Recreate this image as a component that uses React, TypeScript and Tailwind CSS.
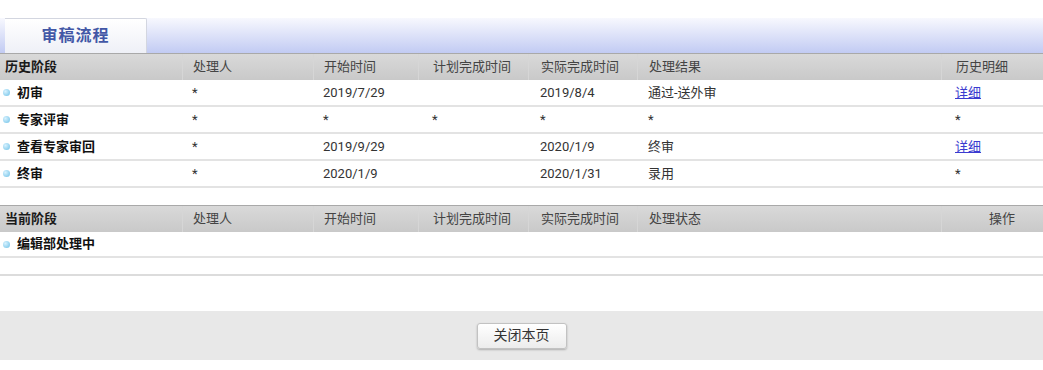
const font = "font-['Roboto','Noto_Sans_CJK_SC',sans-serif]"

const pads = ['pl-[5px]', 'pl-[10px]', 'pl-[10px]', 'pl-[14px]', 'pl-[12px]', 'pl-[11px]', 'pl-[14px]']
const cols = 'grid grid-cols-[182px_131px_105px_110px_109px_304px_1fr]'

const history = [
  ['初审', '*', '2019/7/29', '', '2019/8/4', '通过-送外审', 'link'],
  ['专家评审', '*', '*', '*', '*', '*', '*'],
  ['查看专家审回', '*', '2019/9/29', '', '2020/1/9', '终审', 'link'],
  ['终审', '*', '2020/1/9', '', '2020/1/31', '录用', '*'],
]

const Bullet = () => (
  <span className="inline-block w-[7px] h-[7px] rounded-full bg-[radial-gradient(circle_at_35%_35%,#d8f2ff,#6cc0e6)] mr-[7px] -ml-[2px]" />
)

const Header = ({ titles, last }: { titles: string[]; last: string }) => (
  <div className={`${cols} h-[27px] items-center border-t border-[#a9a9a9] bg-[linear-gradient(#d9d9d9,#c9c9c9)] text-[13px] text-[#444]`}>
    {titles.map((t, i) => (
      <div key={i} className={`${pads[i]} h-full flex items-center ${i > 0 ? 'border-l border-[#d6d6d6]' : 'font-bold text-[#1a1a1a]'}`}>
        {t}
      </div>
    ))}
    <div className={`h-full flex items-center border-l border-[#d6d6d6] ${last === '操作' ? 'pl-[47px]' : 'pl-[14px]'}`}>{last}</div>
  </div>
)

export default function App() {
  return (
    <div className={`w-[1043px] h-[370px] bg-white overflow-hidden ${font}`}>
      <div className="pt-[18px]">
        <div className="flex h-[35px] bg-[linear-gradient(#f7f8fe,#c2cbf3)]">
          <div className="w-[5px]" />
          <div className="w-[142px] flex items-center justify-center bg-[linear-gradient(#ffffff,#eef0f7)] border-t border-r border-[#d3d6e0] rounded-tr-[2px] text-[16px] font-bold text-[#4257a6] tracking-[1px]">
            审稿流程
          </div>
          <div className="flex-1" />
        </div>
      </div>

      <Header titles={['历史阶段', '处理人', '开始时间', '计划完成时间', '实际完成时间', '处理结果']} last="历史明细" />
      {history.map((r, ri) => (
        <div key={ri} className={`${cols} h-[27px] items-center border-b-2 border-[#e3e3e3] text-[13px] text-[#333]`}>
          {r.map((c, i) => (
            <div key={i} className={`${pads[i]} flex items-center ${i === 0 ? 'font-bold text-[#111]' : ''}`}>
              {i === 0 && <Bullet />}
              {c === 'link' ? <a className="text-[#3b3bd0] underline cursor-pointer">详细</a> : c}
            </div>
          ))}
        </div>
      ))}

      <div className="h-[17px]" />
      <Header titles={['当前阶段', '处理人', '开始时间', '计划完成时间', '实际完成时间', '处理状态']} last="操作" />
      <div className="h-[26px] flex items-center pl-[5px] border-b-2 border-[#e3e3e3] text-[13px] font-bold text-[#111]">
        <Bullet />
        编辑部处理中
      </div>
      <div className="h-[18px] border-b-2 border-[#dcdcdc]" />

      <div className="h-[35px]" />
      <div className="h-[49px] bg-[#e8e8e8] flex items-center justify-center">
        <button className="w-[90px] h-[26px] rounded-[3px] border border-[#c2c2c2] bg-[linear-gradient(#ffffff,#ececec)] shadow-[0_1px_2px_rgba(0,0,0,0.25)] text-[14px] text-[#333]">
          关闭本页
        </button>
      </div>
    </div>
  )
}
